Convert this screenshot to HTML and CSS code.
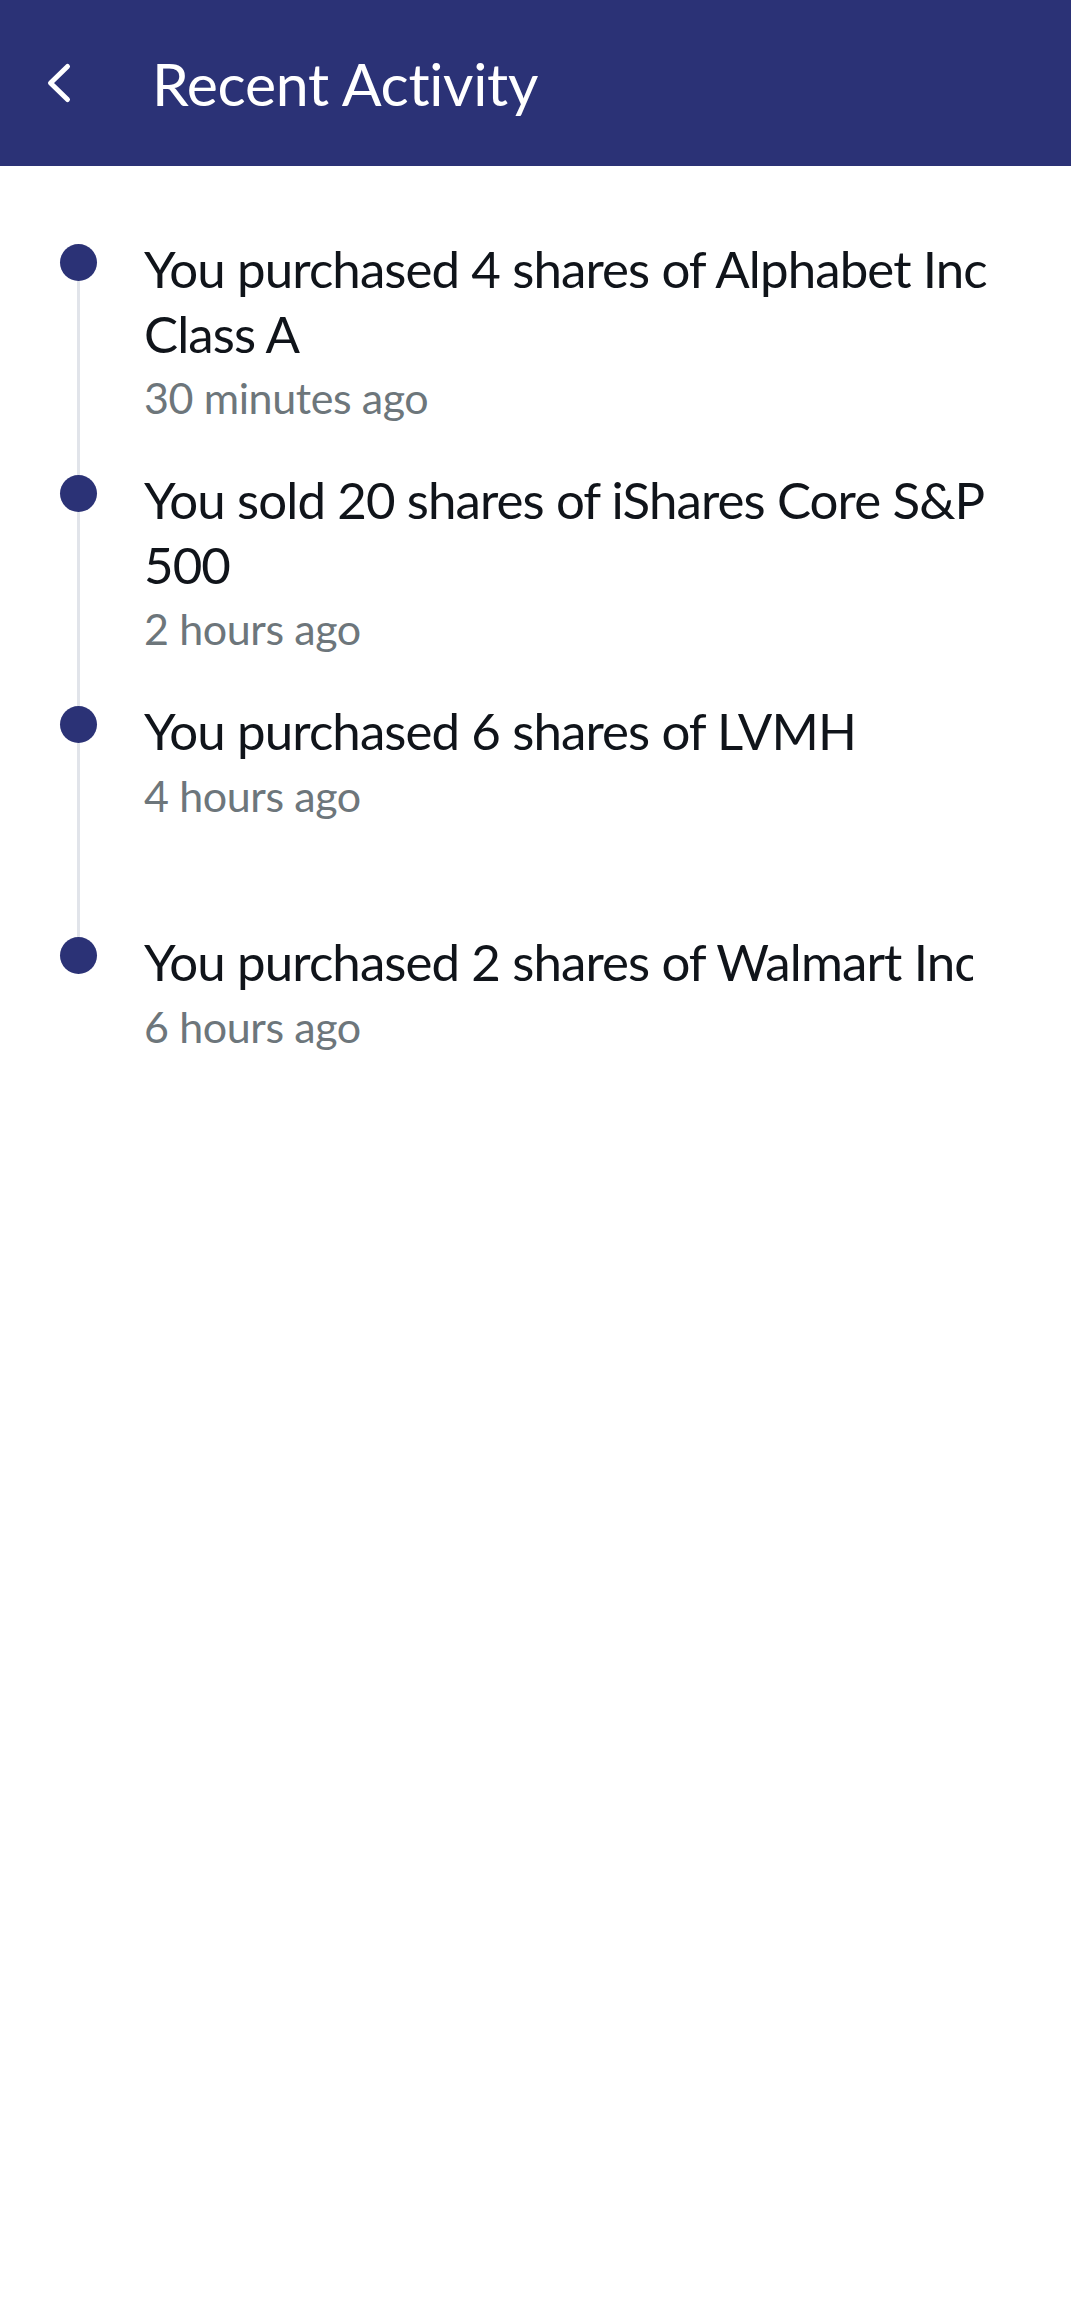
FILE: index.html
```html
<!DOCTYPE html>
<html>
<head>
    <title>Recent Activity</title>
    <link rel="stylesheet" href="styles.css">
</head>
<body>
    <div class="top-bar">
        <a class="back-button" href="#">
            <svg width="30" height="44" viewBox="0 0 30 44">
                <path d="M21.5 5.5 L4.5 22 L21.5 38.5" fill="none" stroke="white" stroke-width="5" stroke-linecap="round" stroke-linejoin="round"/>
            </svg>
        </a>
        <h1>Recent Activity</h1>
    </div>

    <div id="activity-list">
        <div class="activity-item">
            <span class="dot"></span>
            <div class="activity-text">
                <p class="activity-title">You purchased 4 shares of Alphabet Inc Class A</p>
                <p class="activity-time">30 minutes ago</p>
            </div>
        </div>
        <div class="activity-item">
            <span class="dot"></span>
            <div class="activity-text">
                <p class="activity-title">You sold 20 shares of iShares Core S&amp;P 500</p>
                <p class="activity-time">2 hours ago</p>
            </div>
        </div>
        <div class="activity-item">
            <span class="dot"></span>
            <div class="activity-text">
                <p class="activity-title">You purchased 6 shares of LVMH</p>
                <p class="activity-time">4 hours ago</p>
            </div>
        </div>
        <div class="activity-item">
            <span class="dot"></span>
            <div class="activity-text clipped">
                <p class="activity-title">You purchased 2 shares of Walmart Inc Class A</p>
                <p class="activity-time">6 hours ago</p>
            </div>
        </div>
    </div>
</body>
</html>
```

FILE: styles.css
```css
body {
    margin: 0;
    font-family: Lato, "Open Sans", sans-serif;
    background-color: white;
}

.top-bar {
    display: flex;
    align-items: center;
    height: 166px;
    padding-left: 46px;
    background-color: #2b3276;
}

.back-button {
    display: flex;
    width: 30px;
    height: 44px;
}

.top-bar h1 {
    margin: 0 0 0 76px;
    color: white;
    font-size: 59px;
    font-weight: normal;
    letter-spacing: -0.3px;
}

#activity-list {
    padding-top: 71px;
}

.activity-item {
    position: relative;
    height: 231px;
    padding-left: 144px;
}

.activity-item::before {
    content: "";
    position: absolute;
    left: 77px;
    top: 26px;
    width: 3px;
    height: 231px;
    background-color: #e1e4ea;
}

.activity-item:last-child::before {
    display: none;
}

.dot {
    position: absolute;
    left: 60px;
    top: 7px;
    width: 37px;
    height: 37px;
    border-radius: 50%;
    background-color: #2b3276;
}

.activity-text {
    width: 880px;
}

.activity-text.clipped {
    width: 829px;
    overflow: hidden;
    white-space: nowrap;
}

.activity-title {
    margin: 0;
    font-size: 51px;
    line-height: 64.5px;
    letter-spacing: -0.9px;
    color: #10141a;
}

.activity-time {
    margin: 0;
    font-size: 43px;
    line-height: 64px;
    letter-spacing: -0.4px;
    color: #6d767b;
}
```
